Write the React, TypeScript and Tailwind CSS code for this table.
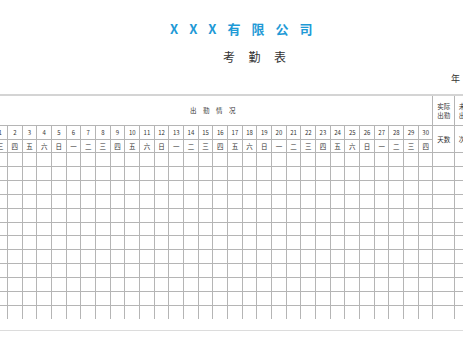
const WEEK = ["三", "四", "五", "六", "日", "一", "二"];
const DAYS = Array.from({ length: 30 }, (_, i) => i + 1);
const BODY_ROWS = Array.from({ length: 12 }, (_, i) => i);

const cell = "bg-white flex items-center justify-center text-[#333] leading-none";
const stack = "bg-white flex flex-col justify-center text-[#333] text-[6.5px] leading-[8.5px]";

export default function App() {
  return (
    <div
      className="w-[463px] h-[348px] overflow-hidden bg-white"
      style={{ fontFamily: '"Noto Sans CJK SC", "Noto Sans", sans-serif' }}
    >
      <div className="h-[95px] flex flex-col">
        <div className="pt-[20px] pl-[170px] text-[13px] leading-[17px] font-bold tracking-[11px] text-[#1f9ad6] whitespace-nowrap">
          XXX有限公司
        </div>
        <div className="pt-[12px] pl-[223px] text-[12px] leading-[16px] tracking-[13.5px] text-[#333] whitespace-nowrap">
          考勤表
        </div>
        <div className="pt-[8px] pl-[451px] text-[9px] leading-[12px] text-[#333]">年</div>
      </div>

      <div className="border-t-2 border-[#d4d4d4] -mt-px">
        <div
          className="grid gap-px bg-[#b5b5b5] ml-[-6.68px] w-max"
          style={{
            gridTemplateColumns: "repeat(30, 13.68px) 20.3px 30px",
            gridTemplateRows: "29px 13px 12px repeat(12, 12.92px)",
          }}
        >
          <div className={`${cell} col-span-30 text-[6.5px] tracking-[6.5px] pl-[6px]`}>出勤情况</div>
          <div className={`${stack} items-center`}>
            <span>实际</span>
            <span>出勤</span>
          </div>
          <div className={`${stack} items-start pl-[4px] whitespace-nowrap`}>
            <span>未出</span>
            <span>出勤</span>
          </div>

          {DAYS.map((d) => (
            <div key={`n${d}`} className={`${cell} text-[6px]`}>
              {d}
            </div>
          ))}
          <div className={`${cell} row-span-2 text-[6.5px]`}>天数</div>
          <div className={`${cell} row-span-2 text-[6.5px] justify-start pl-[4px] whitespace-nowrap`}>次数</div>

          {DAYS.map((d) => (
            <div key={`w${d}`} className={`${cell} text-[6.5px]`}>
              {WEEK[(d - 1) % 7]}
            </div>
          ))}

          {BODY_ROWS.map((r) =>
            Array.from({ length: 32 }, (_, c) => <div key={`b${r}-${c}`} className="bg-white" />)
          )}
        </div>
        <div className="h-[12px] border-b border-[#dcdcdc]" />
      </div>
    </div>
  );
}
